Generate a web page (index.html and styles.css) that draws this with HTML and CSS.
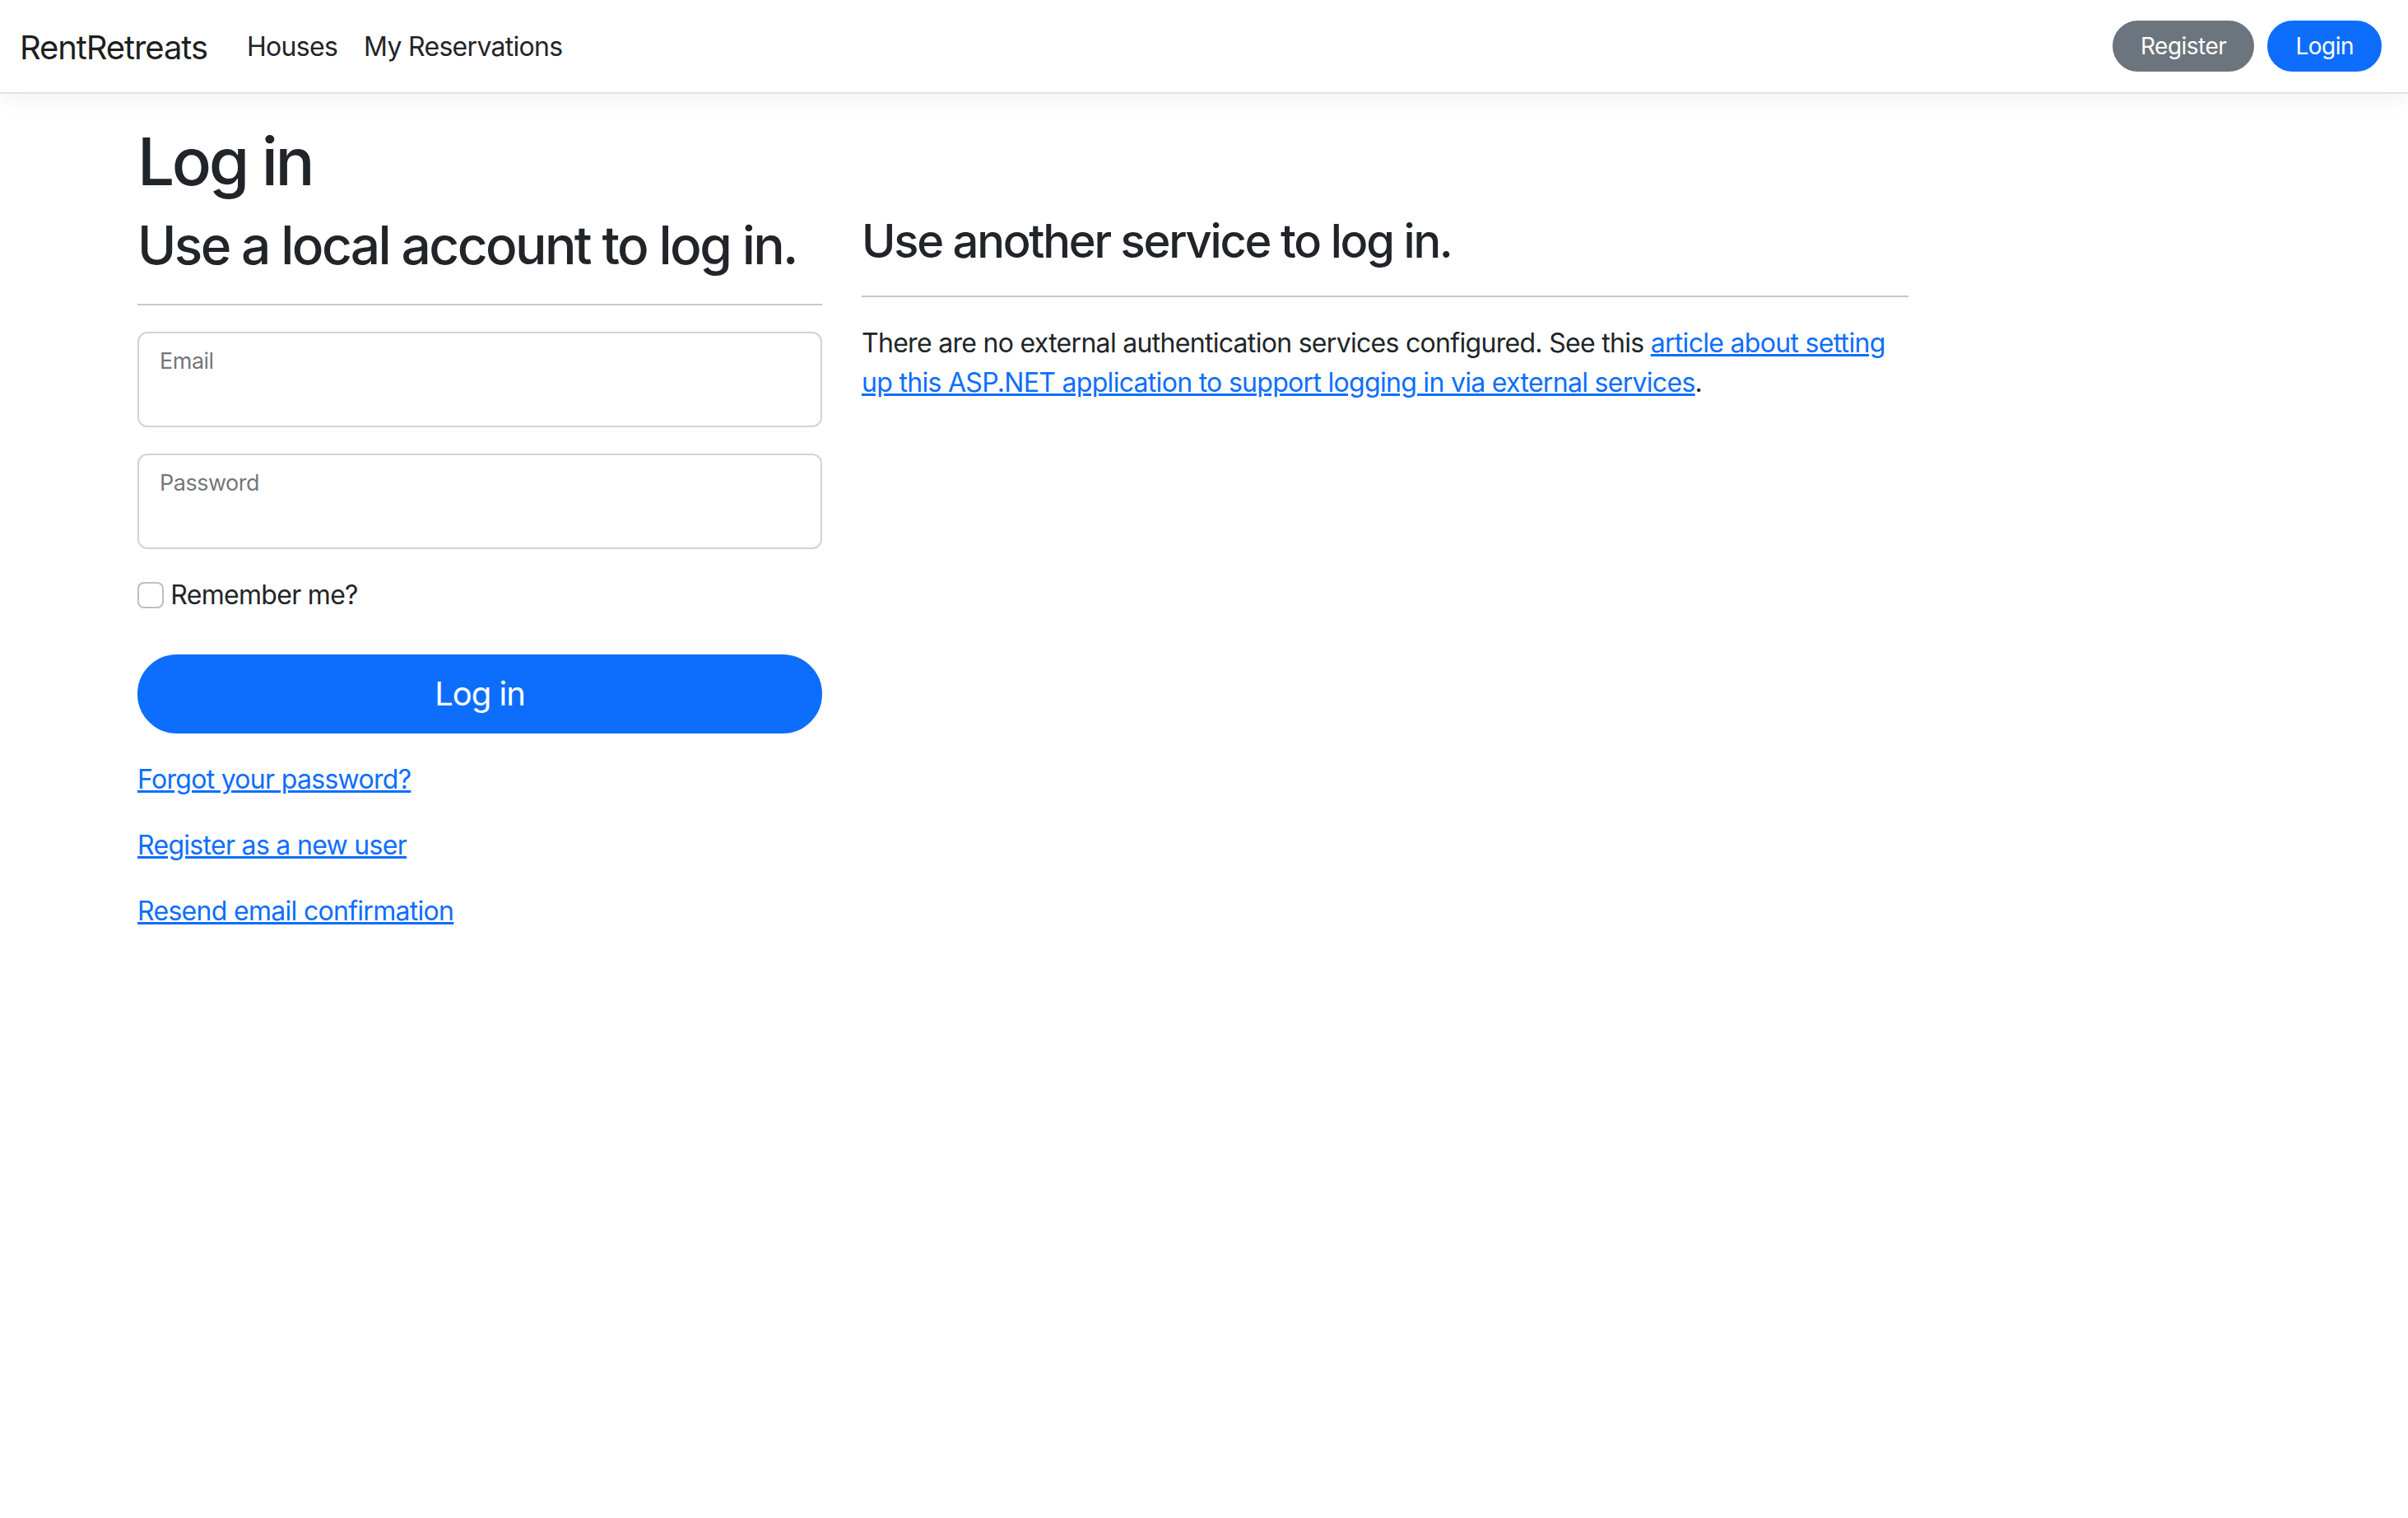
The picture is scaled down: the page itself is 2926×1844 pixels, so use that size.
FILE: index.html
```html
<!DOCTYPE html>
<html lang="en">
<head>
<meta charset="utf-8">
<title>Log in - RentRetreats</title>
<link rel="stylesheet" href="styles.css">
</head>
<body>
<header>
  <nav class="navbar">
    <div class="nav-inner">
      <a class="brand" href="#">RentRetreats</a>
      <ul class="nav-links">
        <li><a class="nav-link" href="#">Houses</a></li>
        <li><a class="nav-link" href="#">My Reservations</a></li>
      </ul>
      <ul class="nav-actions">
        <li><a class="btn-sm btn-secondary" href="#">Register</a></li>
        <li><a class="btn-sm btn-primary" href="#">Login</a></li>
      </ul>
    </div>
  </nav>
</header>
<div class="container">
  <main class="main">
    <h1>Log in</h1>
    <div class="row">
      <div class="col-4">
        <section>
          <form class="login-form" onsubmit="return false;">
            <h2>Use a local account to log in.</h2>
            <hr>
            <div class="form-floating">
              <input class="form-control" type="email" id="email" autocomplete="username">
              <label for="email">Email</label>
            </div>
            <div class="form-floating">
              <input class="form-control" type="password" id="password" autocomplete="current-password">
              <label for="password">Password</label>
            </div>
            <div class="checkbox">
              <label class="form-label"><input class="form-check-input" type="checkbox"> Remember me?</label>
            </div>
            <div>
              <button type="submit" class="btn-lg">Log in</button>
            </div>
            <div class="links">
              <p><a href="#">Forgot your password?</a></p>
              <p><a href="#">Register as a new user</a></p>
              <p><a href="#">Resend email confirmation</a></p>
            </div>
          </form>
        </section>
      </div>
      <div class="col-6">
        <section>
          <h3>Use another service to log in.</h3>
          <hr>
          <div>
            <p>There are no external authentication services configured. See this <a href="#">article about setting up this ASP.NET application to support logging in via external services</a>.</p>
          </div>
        </section>
      </div>
    </div>
  </main>
</div>
</body>
</html>
```

FILE: styles.css
```css
* { box-sizing: border-box; }

html { font-size: 32px; }

body {
  margin: 0;
  font-family: Inter, "Noto Sans", "Liberation Sans", sans-serif;
  font-size: 32px;
  line-height: 1.5;
  letter-spacing: -0.7px;
  color: #212529;
  background: #fff;
}

ul { list-style: none; margin: 0; padding: 0; }

a { color: #0d6efd; }

/* navbar */
.navbar {
  border-bottom: 2px solid #dee2e6;
  box-shadow: 0 8px 24px rgba(0, 0, 0, 0.05);
  margin-bottom: 34px;
  padding: 16px 0;
  background: #fff;
}
.nav-inner {
  display: flex;
  align-items: center;
  padding: 0 32px 0 24px;
}
.brand {
  color: rgba(0, 0, 0, 0.9);
  text-decoration: none;
  font-size: 40px;
  letter-spacing: -1.1px;
  line-height: 60px;
  padding: 12px 0 8px;
  margin-right: 32px;
}
.nav-links { display: flex; }
.nav-link {
  display: block;
  padding: 17px 16px 15px;
  line-height: 48px;
  color: #212529;
  text-decoration: none;
}
.nav-actions {
  display: flex;
  gap: 16px;
  margin-left: auto;
}
.btn-sm {
  display: inline-block;
  font-size: 28px;
  letter-spacing: -0.5px;
  line-height: 42px;
  padding: 8px 32px;
  border: 2px solid transparent;
  border-radius: 100px;
  color: #fff;
  text-decoration: none;
  font-weight: 400;
}
.btn-secondary { background: #6c757d; border-color: #6c757d; }
.btn-primary { background: #0d6efd; border-color: #0d6efd; }

/* main */
.container {
  max-width: 2640px;
  margin: 0 auto;
  padding: 0 24px;
}
.main { padding-bottom: 32px; }

h1, h2, h3 {
  margin: 0 0 16px;
  font-weight: 500;
  line-height: 1.2;
}
h1 { font-size: 80px; letter-spacing: -3.4px; }
h2 { font-size: 64px; letter-spacing: -2.6px; }
h3 { font-size: 56px; letter-spacing: -2.2px; }

.row {
  display: flex;
  margin: 0 -24px;
}
.col-4 { flex: 0 0 33.33333%; padding: 0 24px; }
.col-6 { flex: 0 0 50%; padding: 0 24px; }

hr {
  margin: 32px 0;
  border: 0;
  border-top: 2px solid #212529;
  opacity: 0.25;
}

p { margin: 0 0 32px; }

.form-floating {
  position: relative;
  margin-bottom: 32px;
}
.form-control {
  display: block;
  width: 100%;
  height: 116px;
  padding: 52px 24px 16px;
  font: inherit;
  font-size: 32px;
  line-height: 1.25;
  color: #212529;
  background: #fff;
  border: 2px solid #ced4da;
  border-radius: 12px;
  outline: none;
}
.form-floating label {
  position: absolute;
  top: 16px;
  left: 27px;
  font-size: 27px;
  letter-spacing: -0.5px;
  line-height: 1.5;
  color: rgba(33, 37, 41, 0.65);
  pointer-events: none;
}

.checkbox { margin-bottom: 32px; }
.form-label {
  display: inline-block;
  margin-bottom: 16px;
}
.form-check-input {
  appearance: none;
  -webkit-appearance: none;
  width: 32px;
  height: 32px;
  margin: 8px 0 0;
  vertical-align: top;
  border: 2px solid rgba(0, 0, 0, 0.25);
  border-radius: 8px;
  background: #fff;
}

.btn-lg {
  display: block;
  width: 100%;
  font: inherit;
  font-size: 40px;
  letter-spacing: -1px;
  line-height: 60px;
  padding: 16px 32px;
  color: #fff;
  background: #0d6efd;
  border: 2px solid #0d6efd;
  border-radius: 100px;
  cursor: pointer;
}

.links { margin-top: 32px; }
.links p { margin-bottom: 32px; }
```
